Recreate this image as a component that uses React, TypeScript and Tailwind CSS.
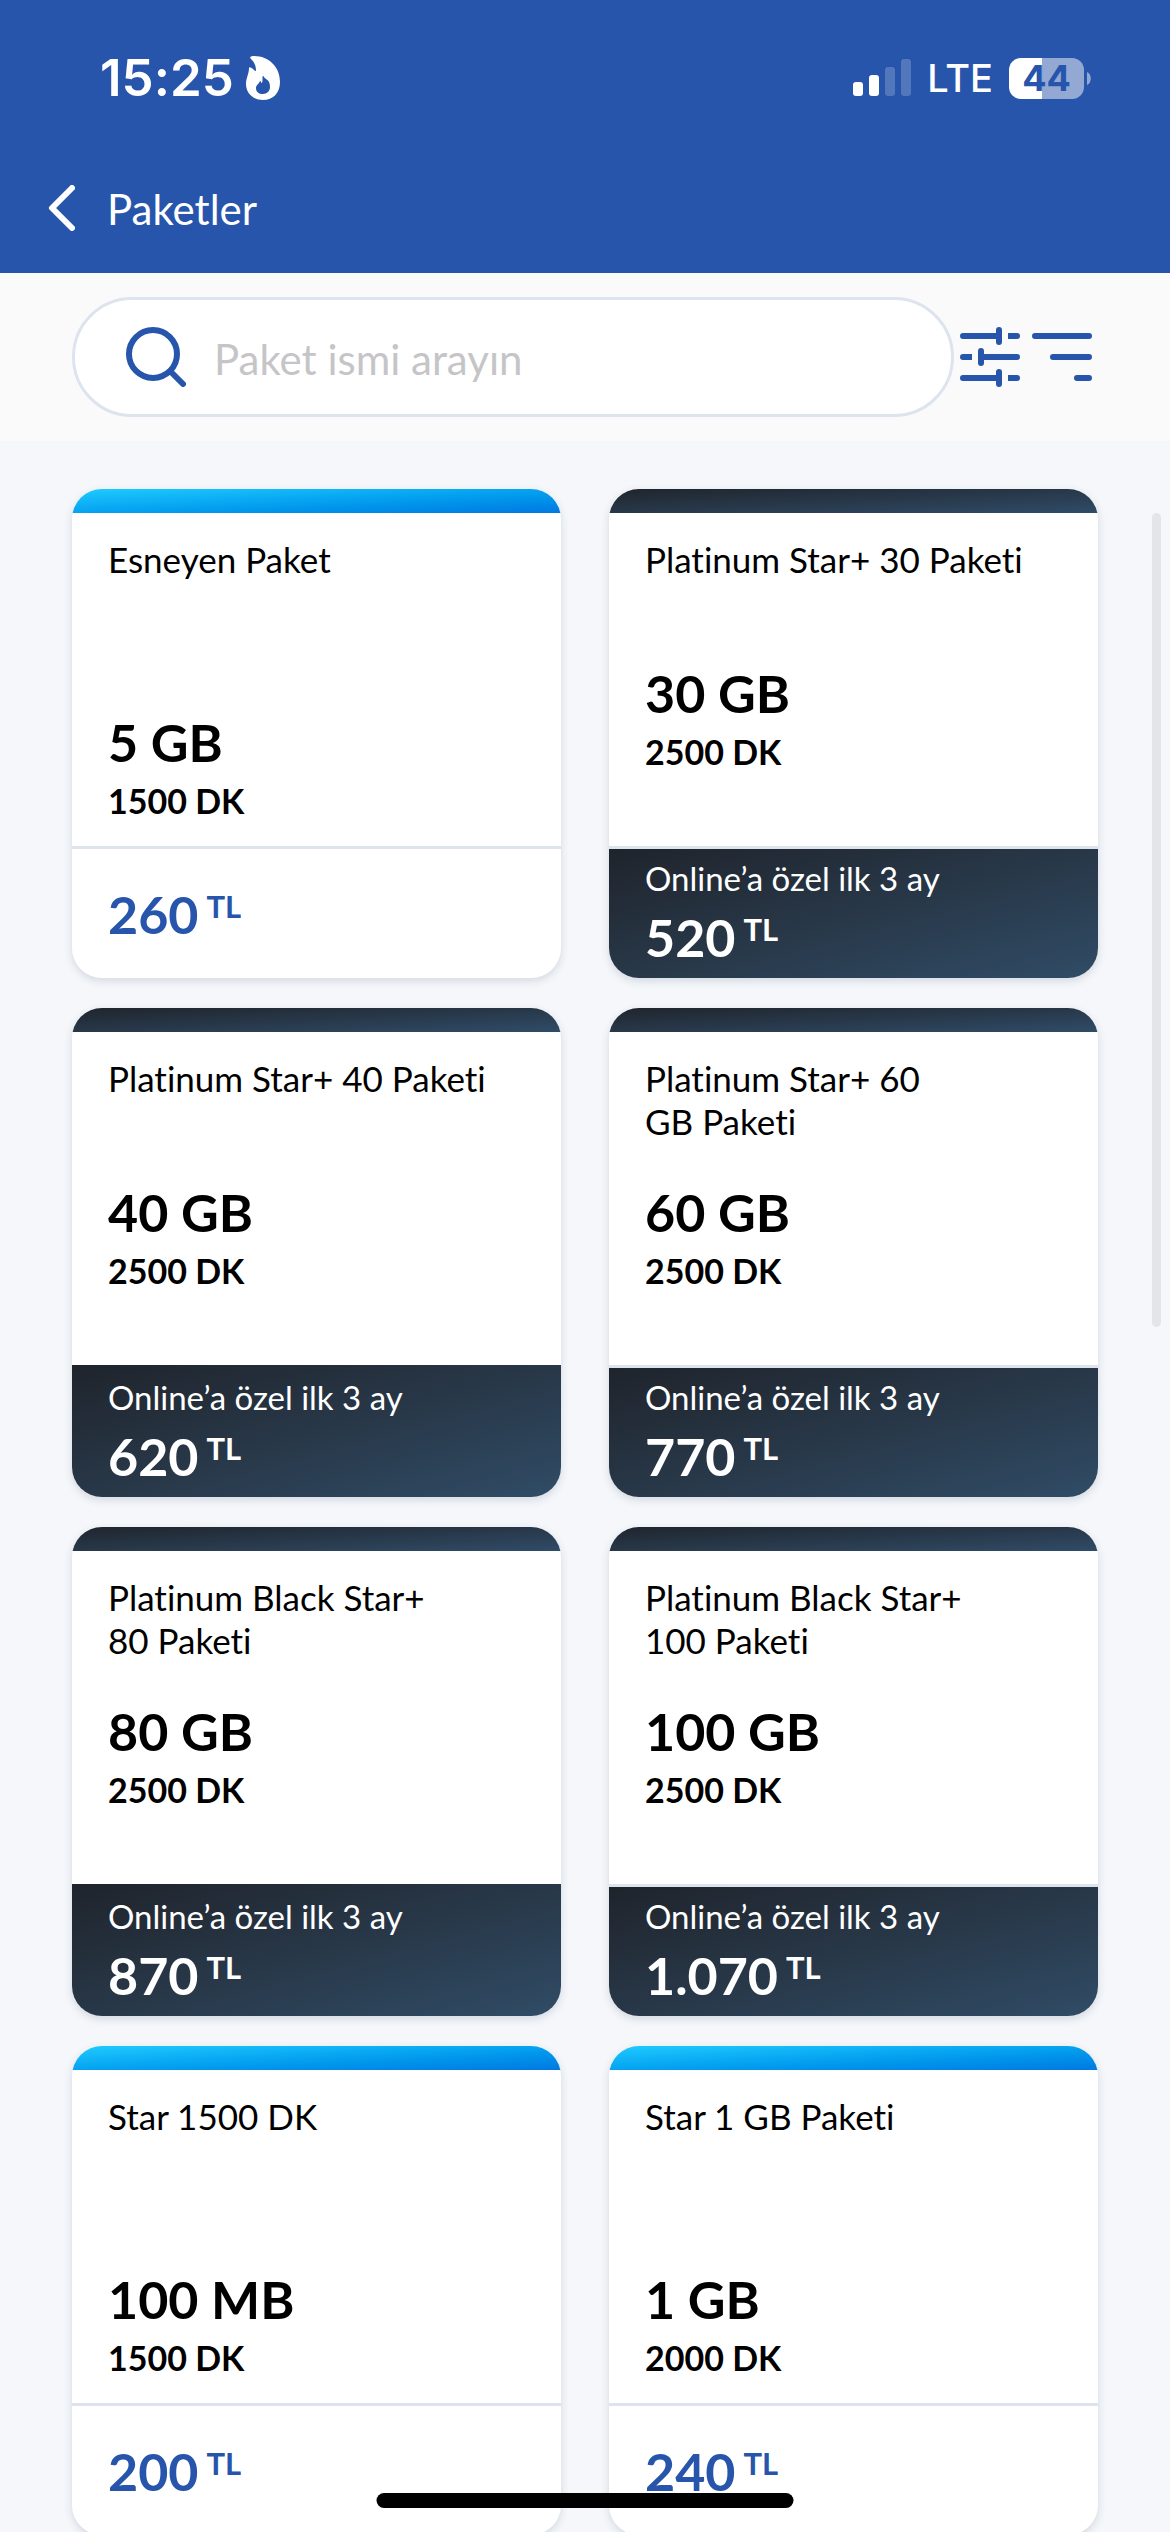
import clsx from 'clsx';

type Pack = {
  name: string;
  data: string;
  minutes: string;
  price: string;
  platinum?: boolean;
  divider?: boolean;
};

const packs: Pack[] = [
  { name: 'Esneyen Paket', data: '5 GB', minutes: '1500 DK', price: '260' },
  { name: 'Platinum Star+ 30 Paketi', data: '30 GB', minutes: '2500 DK', price: '520', platinum: true, divider: true },
  { name: 'Platinum Star+ 40 Paketi', data: '40 GB', minutes: '2500 DK', price: '620', platinum: true },
  { name: 'Platinum Star+ 60\nGB Paketi', data: '60 GB', minutes: '2500 DK', price: '770', platinum: true, divider: true },
  { name: 'Platinum Black Star+\n80 Paketi', data: '80 GB', minutes: '2500 DK', price: '870', platinum: true },
  { name: 'Platinum Black Star+\n100 Paketi', data: '100 GB', minutes: '2500 DK', price: '1.070', platinum: true, divider: true },
  { name: 'Star 1500 DK', data: '100 MB', minutes: '1500 DK', price: '200' },
  { name: 'Star 1 GB Paketi', data: '1 GB', minutes: '2000 DK', price: '240' }
];

function StatusBar() {
  return (
    <div className="flex h-[156px] items-center justify-between pl-[100px] pr-[79px] font-[Inter,sans-serif]">
      <div className="flex items-center gap-3">
        <span className="text-[51px] leading-[60px] font-semibold">15:25</span>
        <svg width="34" height="44" viewBox="0 0 34 44" fill="currentColor">
          <path
            fillRule="evenodd"
            d="M5 3C3 1 5 0 8 0C23 0 34 11 34 26C34 37 27 44 17 44C7 44 0 37 0 28C0 22 3 18 3 12C3 10 6 12 7 13C8 14 9 15 10 15C10 9 8 6 5 3ZM17 20C16 20 17 24 16 27C15 27 15 25 14 25C13 28 10 29 10 32C10 36 13 38 17 38C21 38 24 35 24 31C24 26 22 24 20 23C18 22 18 20 17 20Z"
          />
        </svg>
      </div>
      <div className="flex items-center">
        <svg width="58" height="38" viewBox="0 0 58 38" fill="currentColor">
          <rect x="0" y="23" width="10" height="14" rx="3" />
          <rect x="16" y="16" width="10" height="21" rx="3" />
          <rect x="32" y="8" width="10" height="29" rx="3" opacity="0.2" />
          <rect x="48" y="0" width="10" height="37" rx="3" opacity="0.2" />
        </svg>
        <span className="ml-4 text-[38px] leading-[48px] font-medium">LTE</span>
        <div className="ml-4 flex h-[41px] w-[75px] items-center justify-center rounded-xl bg-linear-to-r from-white from-44% to-[#93a9d4] to-44% text-[36px] leading-[41px] font-bold text-[#2755ab]">
          44
        </div>
        <svg className="ml-[3px]" width="4" height="13" viewBox="0 0 4 13" fill="#93a9d4">
          <path d="M0 0C5 2 5 11 0 13Z" />
        </svg>
      </div>
    </div>
  );
}

function Header() {
  return (
    <header className="shrink-0 bg-[#2755ab] text-white">
      <StatusBar />
      <div className="flex h-[117px] items-start px-12 pt-7">
        <button type="button" aria-label="Geri" className="flex h-12 items-center">
          <svg width="27" height="46" viewBox="0 0 27 46" fill="none" stroke="currentColor" strokeWidth="6" strokeLinecap="round" strokeLinejoin="round">
            <path d="M24 3L4 23L24 43" />
          </svg>
        </button>
        <h1 className="ml-8 text-[42px] leading-[50px]">Paketler</h1>
      </div>
    </header>
  );
}

function SearchBar() {
  return (
    <div className="flex h-[168px] shrink-0 items-center bg-[#fafafa] pl-[72px] pr-[78px]">
      <label className="flex h-[120px] flex-1 items-center gap-7 rounded-full border-3 border-[#dde4ee] bg-white pl-[51px]">
        <svg width="60" height="60" viewBox="0 0 60 60" fill="none" stroke="#2755ab" strokeWidth="6" strokeLinecap="round">
          <circle cx="27" cy="27" r="24" />
          <path d="M45 45L57 57" />
        </svg>
        <input
          type="text"
          aria-label="Paket ismi arayın"
          placeholder="Paket ismi arayın"
          className="min-w-0 flex-1 bg-transparent pt-1 text-[42px] leading-[50px] outline-none placeholder:text-[#c5c5c7]"
        />
      </label>
      <div className="ml-[6px] flex gap-3 text-[#2755ab]">
        <button type="button" aria-label="Filtrele">
          <svg width="60" height="60" viewBox="0 0 60 60" fill="none" stroke="currentColor" strokeWidth="6" strokeLinecap="round">
            <path d="M3 9H39M39 3V15M57 9H54M3 30H6M21 24V36M21 30H57M3 51H39M39 45V57M57 51H54" />
            <path strokeLinecap="butt" d="M48 9H55M5 30H12M48 51H55" />
          </svg>
        </button>
        <button type="button" aria-label="Sırala">
          <svg width="60" height="60" viewBox="0 0 60 60" fill="none" stroke="currentColor" strokeWidth="6" strokeLinecap="round">
            <path d="M3 9H57M21 30H57M45 51H57" />
          </svg>
        </button>
      </div>
    </div>
  );
}

function PackCard({ name, data, minutes, price, platinum, divider }: Pack) {
  return (
    <article className="flex h-[489px] flex-col overflow-hidden rounded-[30px] bg-white shadow-[0_3px_9px_rgba(40,60,100,0.16)]">
      <div
        className={clsx(
          'h-6 shrink-0 bg-linear-to-br',
          platinum ? 'from-[#1f252d] to-[#304c68]' : 'from-[#1fcbff] to-[#0078e0]'
        )}
      />
      <div className="flex flex-1 flex-col px-9 pt-[25px] pb-[23px] text-black">
        <h2 className="min-h-[86px] text-[35px] leading-[43px] whitespace-pre-line">{name}</h2>
        <div className={platinum ? 'mt-10' : 'mt-auto'}>
          <p className="text-[52px] leading-[58px] font-bold">{data}</p>
          <p className="mt-2 text-[34px] leading-[44px] font-bold">{minutes}</p>
        </div>
      </div>
      <div
        className={clsx(
          'flex h-[132px] shrink-0 flex-col border-t-3 px-9',
          platinum
            ? 'gap-3 bg-linear-to-br from-[#1f242c] to-[#304c66] pt-[11px] text-white'
            : 'justify-center text-[#2755ab]',
          platinum && !divider ? 'border-transparent bg-origin-border' : 'border-[#dde4ee]'
        )}
      >
        {platinum && <p className="text-[33px] leading-[36px]">Online’a özel ilk 3 ay</p>}
        <p className="flex items-start gap-2 text-[52px] leading-[58px] font-bold">
          {price}
          <span className="text-[31px] leading-[42px]">TL</span>
        </p>
      </div>
    </article>
  );
}

export default function App() {
  return (
    <div className="relative flex h-screen flex-col overflow-hidden bg-[#f5f7fa] font-[Lato,sans-serif] [font-variant-ligatures:none]">
      <Header />
      <SearchBar />
      <main className="relative min-h-0 flex-1 overflow-y-auto px-[72px] pt-12 [scrollbar-width:none]">
        <div className="grid grid-cols-2 gap-x-12 gap-y-[30px]">
          {packs.map((pack) => (
            <PackCard key={pack.name} {...pack} />
          ))}
        </div>
        {/* Scroll indicator */}
        <div className="absolute top-[72px] right-[9px] h-[814px] w-[9px] rounded-full bg-[#e4e5e8]" />
      </main>
      {/* Home indicator */}
      <div className="absolute bottom-6 left-1/2 h-[15px] w-[417px] -translate-x-1/2 rounded-full bg-black" />
    </div>
  );
}
